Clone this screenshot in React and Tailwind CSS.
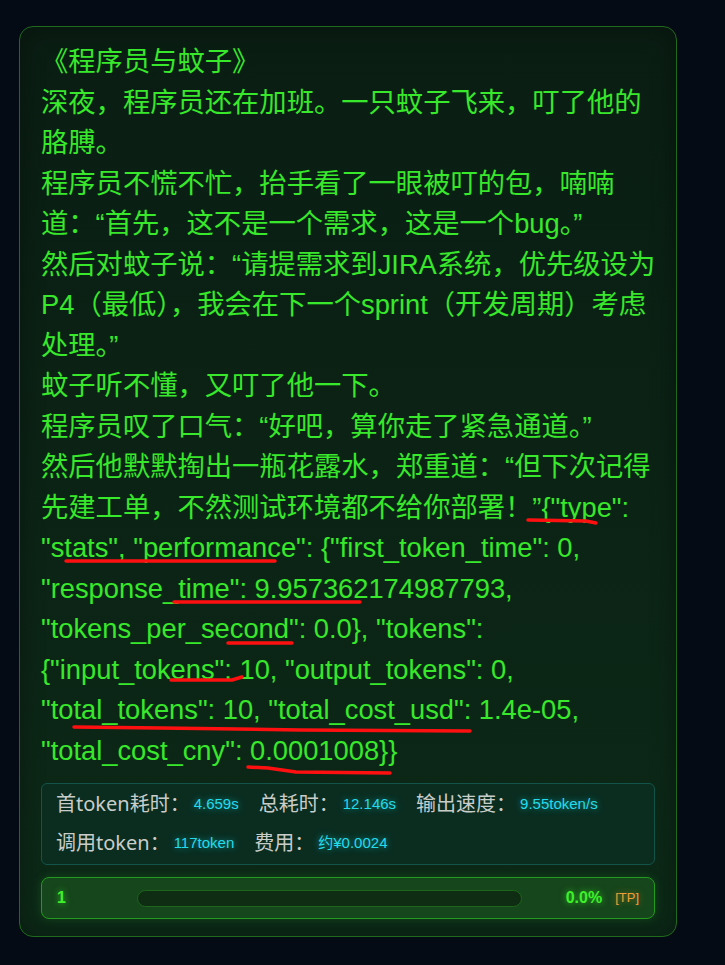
import React from 'react';

const story = `《程序员与蚊子》
深夜，程序员还在加班。一只蚊子飞来，叮了他的胳膊。
程序员不慌不忙，抬手看了一眼被叮的包，喃喃道：“首先，这不是一个需求，这是一个bug。”
然后对蚊子说：“请提需求到JIRA系统，优先级设为P4（最低），我会在下一个sprint（开发周期）考虑处理。”
蚊子听不懂，又叮了他一下。
程序员叹了口气：“好吧，算你走了紧急通道。”
然后他默默掏出一瓶花露水，郑重道：“但下次记得先建工单，不然测试环境都不给你部署！”{"type": "stats", "performance": {"first_token_time": 0, "response_time": 9.957362174987793, "tokens_per_second": 0.0}, "tokens": {"input_tokens": 10, "output_tokens": 0, "total_tokens": 10, "total_cost_usd": 1.4e-05, "total_cost_cny": 0.0001008}}`;

const stats = [
  { label: '首token耗时：', value: '4.659s' },
  { label: '总耗时：', value: '12.146s' },
  { label: '输出速度：', value: '9.55token/s' },
  { label: '调用token：', value: '117token' },
  { label: '费用：', value: '约¥0.0024' },
];

// hand-drawn red marks on top of the text
const Scribbles = () => (
  <svg className="absolute top-0 left-0 pointer-events-none" width="725" height="965" fill="none" stroke="#ff1010" strokeWidth="3.5" strokeLinecap="round" strokeLinejoin="round">
    <path d="M528 520 L586 521 L596 523" />
    <path d="M66 561 L275 561" />
    <path d="M174 602 L360 602" />
    <path d="M228 643 L292 643" />
    <path d="M171 680 L232 680 L242 677" />
    <path d="M74 727 L160 728 L300 730 L470 731" />
    <path d="M248 767 L268 768 L296 772 L390 773" />
  </svg>
);

export default function App() {
  return (
    <div className="relative w-[725px] h-[965px] bg-[#040b14] overflow-hidden" style={{ fontFamily: '"Liberation Sans", "Noto Sans CJK SC", sans-serif' }}>
      <div className="pt-[26px] pl-[19px]">
        <div className="w-[658px] rounded-[14px] border border-[#1f6a1c] bg-gradient-to-b from-[#0a1d13] to-[#0c2917] shadow-[inset_0_0_24px_rgba(0,0,0,0.35)] px-[21px] pt-[15px] pb-[17px]">
          <div className="mr-[-6px] whitespace-pre-wrap break-words text-[27.3px] leading-[40.5px] text-[#38e82b]">
            {story}
          </div>

          <div className="mt-[12px] rounded-[6px] border border-[#12544a] bg-[#0a2d20] px-[14px] pt-[6px] pb-[7px] flex flex-wrap gap-x-[20px] gap-y-[11px]">
            {stats.map((s) => (
              <div key={s.label} className="flex items-center h-[28px]">
                <span className="text-[20px] text-[#c9cdca]" style={{ fontFamily: '"Noto Sans", "Noto Sans CJK SC", sans-serif' }}>{s.label}</span>
                <span className="ml-[4px] text-[15px] text-[#22dcec] [text-shadow:0_0_6px_rgba(34,220,236,0.6)]">{s.value}</span>
              </div>
            ))}
          </div>

          <div className="mt-[12px] h-[42px] rounded-[8px] border-[1.5px] border-[#239a1f] bg-[#16461c] shadow-[0_0_10px_rgba(40,160,40,0.25)] px-[15px] flex items-center">
            <span className="w-[80px] text-[16px] font-bold text-[#3ef02a] [text-shadow:0_0_6px_rgba(60,240,40,0.7)]">1</span>
            <div className="flex-1 h-[17px] rounded-full border border-[#1e661c] bg-[#0f2d12]" />
            <span className="w-[80px] text-right text-[16px] font-bold text-[#3ef02a] [text-shadow:0_0_6px_rgba(60,240,40,0.7)]">0.0%</span>
            <span className="ml-[13px] text-[13px] text-[#f0a038] [text-shadow:0_0_6px_rgba(240,160,56,0.6)]">[TP]</span>
          </div>
        </div>
      </div>
      <Scribbles />
    </div>
  );
}
